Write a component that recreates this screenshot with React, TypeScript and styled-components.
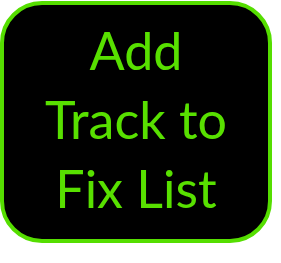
import React from "react";
import styled, { createGlobalStyle } from "styled-components";

const Global = createGlobalStyle`
  html, body { margin: 0; padding: 0; background: #ffffff; }
  body { width: 281px; height: 263px; overflow: hidden; }
`;

const Page = styled.div`
  padding-top: 1px;
  width: 281px;
  height: 263px;
  box-sizing: border-box;
`;

const Button = styled.div`
  box-sizing: border-box;
  width: 272px;
  height: 242px;
  padding-bottom: 6px;
  background: #000000;
  border: 4px solid #55de00;
  border-radius: 42px;
  display: flex;
  flex-direction: column;
  align-items: center;
  justify-content: center;
`;

const Line = styled.div`
  font-family: Lato, "Open Sans", sans-serif;
  font-size: 52px;
  line-height: 69px;
  color: #58e000;
  white-space: nowrap;
  text-align: center;
`;

export default function App() {
  return (
    <>
      <Global />
      <Page>
        <Button>
          <Line>Add</Line>
          <Line>Track to</Line>
          <Line>Fix List</Line>
        </Button>
      </Page>
    </>
  );
}
